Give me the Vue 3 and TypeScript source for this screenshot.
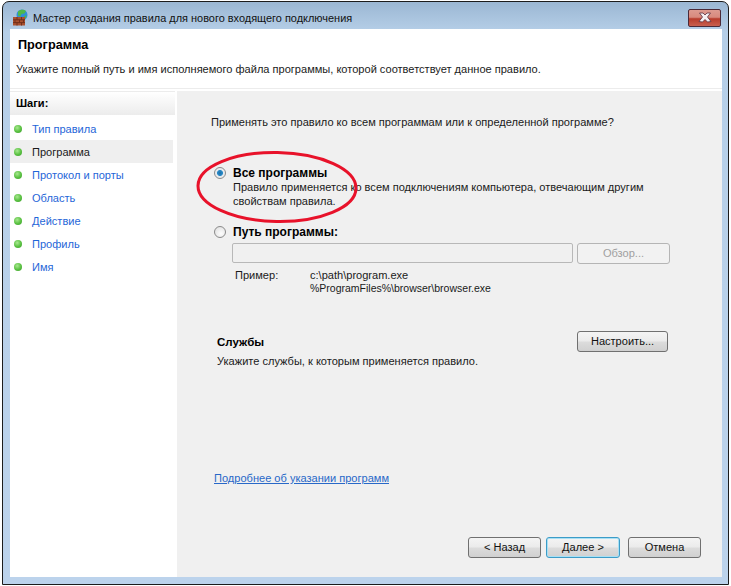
<script setup lang="ts">
const steps = [
  { label: 'Тип правила', current: false },
  { label: 'Программа', current: true },
  { label: 'Протокол и порты', current: false },
  { label: 'Область', current: false },
  { label: 'Действие', current: false },
  { label: 'Профиль', current: false },
  { label: 'Имя', current: false },
]
</script>

<template>
  <div class="page">
    <div class="window">
      <div class="titlebar">
        <svg class="appicon" width="17" height="17" viewBox="0 0 17 17">
          <circle cx="10" cy="6" r="5.500" fill="#2f8fd8" />
          <path d="M6 2.500C8 .5 12 .2 14 2l-1.500 2.500-3 .5-1 2.500L6 6.500z" fill="#4fb84a" />
          <path d="M12 7.500l2.500-1.500-.5 3-2 1z" fill="#4fb84a" />
          <rect x="1" y="8" width="12" height="8.500" fill="#a9502f" />
          <path d="M1 10.800h12M1 13.600h12M5 8v2.800M9.500 8v2.800M3 10.800v2.800M7.500 10.800v2.800M11.500 10.800v2.800M5 13.600v2.900M9.500 13.600v2.900" stroke="#6e2c1a" stroke-width=".9" fill="none" />
        </svg>
        <span class="title">Мастер создания правила для нового входящего подключения</span>
        <div class="close">
          <svg width="16" height="11" viewBox="0 0 16 11">
            <path d="M2.500 1 6 1 8 3l2-2 3.500 0 -3 4 3.500 4.500-3.500.5L8 7.500 5.500 10 2 9.500 5.500 5z" fill="#f4f0f2" stroke="#5a3040" stroke-width=".8" />
          </svg>
        </div>
      </div>
      <div class="client">
        <header class="head">
          <h1>Программа</h1>
          <p>Укажите полный путь и имя исполняемого файла программы, которой соответствует данное правило.</p>
        </header>
        <div class="body">
          <aside class="steps">
            <div class="steps-title">Шаги:</div>
            <ul>
              <li v-for="s in steps" :key="s.label" :class="{ current: s.current }">
                <span class="dot"></span>
                <span>{{ s.label }}</span>
              </li>
            </ul>
          </aside>
          <main class="panel">
            <p class="question">Применять это правило ко всем программам или к определенной программе?</p>
            <div class="option first">
              <span class="radio checked"></span>
              <div>
                <div class="opt-title">Все программы</div>
                <div class="opt-text">Правило применяется ко всем подключениям компьютера, отвечающим другим<br />свойствам правила.</div>
              </div>
            </div>
            <div class="option second">
              <span class="radio"></span>
              <div class="opt-title">Путь программы:</div>
            </div>
            <div class="path-row">
              <div class="input"></div>
              <div class="btn disabled browse">Обзор...</div>
            </div>
            <div class="example">
              <span class="ex-label">Пример:</span>
              <span>c:\path\program.exe<br /><span class="ex-long">%ProgramFiles%\browser\browser.exe</span></span>
            </div>
            <div class="services">
              <div>
                <div class="svc-title">Службы</div>
                <div class="svc-text">Укажите службы, к которым применяется правило.</div>
              </div>
              <div class="btn svc-btn">Настроить...</div>
            </div>
            <a class="link">Подробнее об указании программ</a>
            <div class="footer">
              <div class="btn nav">&lt; Назад</div>
              <div class="btn nav default">Далее &gt;</div>
              <div class="btn nav cancel">Отмена</div>
            </div>
          </main>
        </div>
      </div>
      <svg class="ellipse" width="170" height="78" viewBox="0 0 170 78">
        <ellipse cx="85" cy="37" rx="79" ry="34.500" fill="none" stroke="#e8122a" stroke-width="3" transform="rotate(1 85 37)" />
      </svg>
    </div>
  </div>
</template>

<style>
html, body { margin: 0; background: #fff; }
</style>

<style scoped>
.page {
  width: 731px;
  height: 586px;
  padding: 1px 2px 1px 2px;
  box-sizing: border-box;
  font-family: "Liberation Sans", Arial, sans-serif;
  font-size: 11.060px;
  color: #1a1a1a;
  overflow: hidden;
}
.window {
  position: relative;
  width: 100%;
  height: 100%;
  box-sizing: border-box;
  border: 1px solid #1c1c1c;
  border-radius: 7px 7px 0 0;
  background: linear-gradient(#9bb7d3 0, #b6cfe8 30px, #bcd3ec 100%);
  padding: 0 6px 7px 7px;
  display: flex;
  flex-direction: column;
}
.titlebar {
  height: 27px;
  display: flex;
  align-items: center;
  flex: none;
}
.appicon { margin: 3px 4px 0 2px; flex: none; }
.title { font-size: 10.950px; color: #111; flex: 1; padding-top: 4px; }
.close {
  width: 31px;
  height: 16px;
  margin: 4px 1px 0 0;
  border: 1px solid #4b2a38;
  border-radius: 2px;
  background: linear-gradient(#dd9a90 0, #d88a7e 45%, #b83c2c 55%, #c8604f 100%);
  display: flex;
  align-items: center;
  justify-content: center;
}
.client {
  flex: 1;
  background: #fff;
  display: flex;
  flex-direction: column;
  min-height: 0;
}
.head {
  height: 60px;
  flex: none;
  box-sizing: border-box;
  padding: 9px 0 0 6px;
  border-bottom: 1px solid #ececec;
}
.head h1 {
  margin: 0 0 0 2px;
  font-size: 12.700px;
  line-height: 15px;
  font-weight: 700;
  color: #000;
}
.head p { margin: 9px 0 0; line-height: 14px; }
.body { flex: 1; display: flex; min-height: 0; padding-top: 2px; }
.steps {
  width: 165px;
  flex: none;
  box-sizing: border-box;
  background: #fff;
  border-top: 1px solid #ececec;
}
.steps-title {
  height: 23px;
  line-height: 23px;
  padding-left: 6px;
  font-weight: 700;
  color: #000;
  background: linear-gradient(#fff, #ececec);
}
.steps ul { list-style: none; margin: 0; padding: 2px 0 0; }
.steps li {
  height: 23px;
  width: 163px;
  display: flex;
  align-items: center;
  color: #1f66d8;
}
.steps li.current { color: #1a1a1a; background: #efefef; }
.dot {
  width: 8px;
  height: 8px;
  border-radius: 50%;
  margin: 0 10px 0 4px;
  background: radial-gradient(circle at 40% 35%, #a8e890 0, #58c040 55%, #3e9a30 100%);
}
.panel {
  flex: 1;
  margin-left: 2px;
  background: #f0f0f0;
  min-width: 0;
  box-sizing: border-box;
  padding: 24px 0 0 34px;
  display: flex;
  flex-direction: column;
}
.question { margin: 0; line-height: 14px; }
.option { display: flex; align-items: flex-start; gap: 7px; }
.option.first { margin: 37px 0 0 3px; }
.option.second { margin: 17px 0 0 3px; }
.radio {
  width: 12px;
  height: 12px;
  flex: none;
  margin-top: 1px;
  box-sizing: border-box;
  border: 1px solid #8a8a8a;
  border-radius: 50%;
  background: radial-gradient(circle at 60% 65%, #fdfdfd 0, #dcdcdc 100%);
}
.radio.checked { background: radial-gradient(circle, #1d6fa8 0, #2a8bc8 38%, #e4e8ec 46%, #f4f4f4 100%); }
.opt-title { font-weight: 700; font-size: 12px; color: #000; line-height: 14px; }
.opt-text { margin-top: 1px; line-height: 13.500px; }
.path-row { display: flex; margin: 4px 0 0 21px; gap: 4px; }
.input {
  width: 341px;
  height: 20px;
  box-sizing: border-box;
  background: #f0f0f0;
  border: 1px solid #b8b8b8;
  border-radius: 2px;
}
.btn {
  box-sizing: border-box;
  height: 21px;
  line-height: 19px;
  text-align: center;
  border: 1px solid #707070;
  border-radius: 3px;
  background: linear-gradient(#f4f4f4 0, #ebebeb 48%, #dcdcdc 52%, #d0d0d0 100%);
  color: #111;
}
.btn.disabled {
  color: #a0a0a0;
  background: #f2f2f2;
  border-color: #b5b5b5;
}
.browse { width: 93px; }
.example { display: flex; margin: 5px 0 0 24px; line-height: 13px; }
.ex-label { width: 75px; }
.ex-long { font-size: 10.500px; }
.services {
  display: flex;
  justify-content: space-between;
  align-items: flex-start;
  width: 451px;
  margin: 37px 0 0 6px;
}
.svc-title { margin-top: 3px; font-weight: 700; font-size: 11.500px; color: #000; line-height: 14px; }
.svc-text { margin-top: 5px; line-height: 14px; }
.svc-btn { width: 91px; margin-top: -1px; }
.link {
  margin: 103px 0 0 3px;
  color: #2868c8;
  text-decoration: underline;
  line-height: 14px;
}
.footer { display: flex; margin: 52px 0 0 257px; }
.nav { width: 73px; }
.default { margin-left: 5px; width: 74px; border-color: #3c9cc8; box-shadow: inset 0 0 0 1px #a8e0f4; }
.cancel { margin-left: 8px; }
.ellipse { position: absolute; left: 189px; top: 148px; pointer-events: none; }
</style>
